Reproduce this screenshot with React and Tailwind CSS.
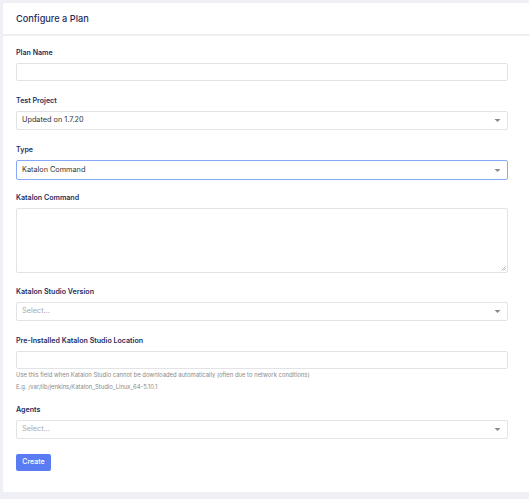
import React from "react";

const labelCls = "block h-[12px] leading-[12px] text-[7.1px] font-semibold text-[#1f2d5e] mb-[4px]";
const boxCls = "w-full border border-[#e1e3e6] rounded-[2px] bg-white";

function Caret() {
  return (
    <svg width="7" height="5" viewBox="0 0 7 5" className="mr-[6px]">
      <path d="M0.5 1h6L3.5 4z" fill="#8a8a8a" />
    </svg>
  );
}

function Select({ value, placeholder, focused }) {
  return (
    <div
      className={`flex items-center justify-between h-[19px] rounded-[2px] bg-white ${
        focused ? "border-[1.5px] border-[#86a9f7] h-[20px]" : "border border-[#e1e3e6]"
      }`}
    >
      <span className={`pl-[5px] text-[7.3px] ${value ? "text-[#333]" : "text-[#a9a9a9]"}`}>
        {value || placeholder}
      </span>
      <Caret />
    </div>
  );
}

export default function App() {
  return (
    <div className="w-[529px] h-[499px] overflow-hidden bg-[#eff0f5] pt-[3px] pl-[3px] font-['Inter','Liberation_Sans',sans-serif]">
      <div className="w-[540px] h-[489px] bg-white rounded-[2px]">
        <div className="h-[33px] flex items-center pl-[13px] border-b-2 border-[#eceef2]">
          <h1 className="text-[9.2px] font-medium text-[#1f2d5e]">Configure a Plan</h1>
        </div>

        <div className="w-[492px] ml-[13px] pt-[11px]">
          <label className={labelCls}>Plan Name</label>
          <div className={`${boxCls} h-[18px]`} />

          <label className={`${labelCls} mt-[14px]`}>Test Project</label>
          <Select value="Updated on 1.7.20" />

          <label className={`${labelCls} mt-[14px]`}>Type</label>
          <Select value="Katalon Command" focused />

          <label className={`${labelCls} mt-[12px]`}>Katalon Command</label>
          <div className={`${boxCls} h-[65px] relative`}>
            <svg width="5" height="5" viewBox="0 0 5 5" className="absolute right-[1px] bottom-[1px]">
              <path d="M4.5 0.5L0.5 4.5M4.5 2.5L2.5 4.5" stroke="#999" strokeWidth="0.7" />
            </svg>
          </div>

          <label className={`${labelCls} mt-[13px]`}>Katalon Studio Version</label>
          <Select placeholder="Select..." />

          <label className={`${labelCls} mt-[14px]`}>Pre-Installed Katalon Studio Location</label>
          <div className={`${boxCls} h-[18px]`} />
          <p className="text-[5.9px] leading-[12px] text-[#8a8a8a]">
            Use this field when Katalon Studio cannot be downloaded automatically (often due to network conditions)
          </p>
          <p className="text-[5.9px] leading-[12px] text-[#8a8a8a]">
            E.g. /var/lib/jenkins/Katalon_Studio_Linux_64-5.10.1
          </p>

          <label className={`${labelCls} mt-[11px] mb-[3px]`}>Agents</label>
          <Select placeholder="Select..." />

          <button className="mt-[15px] h-[17px] w-[35px] rounded-[2px] bg-[#5a7cf3] text-white text-[7px] font-medium">
            Create
          </button>
        </div>
      </div>
    </div>
  );
}
